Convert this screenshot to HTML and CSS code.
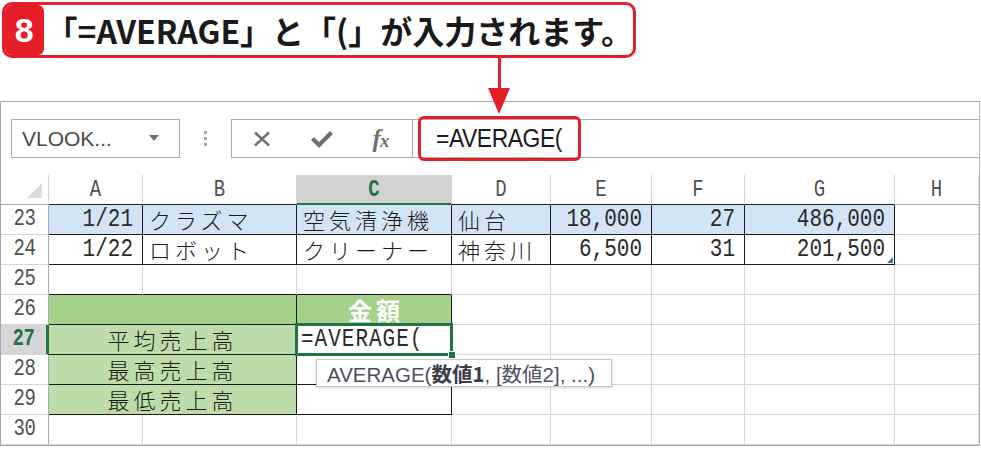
FILE: index.html
```html
<!DOCTYPE html>
<html lang="ja">
<head>
<meta charset="utf-8">
<title>AVERAGE</title>
<link rel="stylesheet" href="styles.css">
</head>
<body>
<div class="page">
  <div class="callout">
    <div class="step">8</div>
    <div class="msg">「=AVERAGE」と「(」が入力されます。</div>
  </div>
  <div class="arrow"><div class="shaft"></div><div class="head"></div></div>

  <div class="window">
    <div class="fbar">
      <div class="namebox"><span class="name">VLOOK...</span><span class="dd"></span></div>
      <div class="grip"><i></i><i></i><i></i></div>
      <div class="btns">
        <svg class="ico" width="18" height="16" viewBox="0 0 18 16"><path d="M2 1.5 L16 14.5 M16 1.5 L2 14.5" stroke="#6f6f6f" stroke-width="2.4" fill="none"/></svg>
        <svg class="ico" width="24" height="18" viewBox="0 0 24 18"><path d="M2.5 8.5 L9 15 L21.5 2.5" stroke="#6f6f6f" stroke-width="4.2" fill="none"/></svg>
        <span class="fx"><span class="f">f</span><span class="x">x</span></span>
      </div>
      <div class="input"><span class="ftext">=AVERAGE(</span></div>
    </div>

    <div class="sheet">
      <div class="corner"><span class="tri"></span></div>
      <div class="ch bk"><span class="v">A</span></div><div class="ch bk"><span class="v">B</span></div><div class="ch selc"><span class="v">C</span></div><div class="ch bk"><span class="v">D</span></div><div class="ch bk"><span class="v">E</span></div><div class="ch bk"><span class="v">F</span></div><div class="ch bk"><span class="v">G</span></div><div class="ch"><span class="v">H</span></div>

      <div class="rh"><span class="v">23</span></div>
      <div class="c t blue num"><span class="v">1/21</span></div>
      <div class="c t blue jp">クラズマ</div>
      <div class="c t blue jp">空気清浄機</div>
      <div class="c t blue jp">仙台</div>
      <div class="c t blue num"><span class="v">18,000</span></div>
      <div class="c t blue num"><span class="v">27</span></div>
      <div class="c t blue num"><span class="v">486,000</span></div>
      <div class="c"></div>

      <div class="rh"><span class="v">24</span></div>
      <div class="c t num"><span class="v">1/22</span></div>
      <div class="c t jp">ロボット</div>
      <div class="c t jp">クリーナー</div>
      <div class="c t jp">神奈川</div>
      <div class="c t num"><span class="v">6,500</span></div>
      <div class="c t num"><span class="v">31</span></div>
      <div class="c t num mark"><span class="v">201,500</span></div>
      <div class="c"></div>

      <div class="rh"><span class="v">25</span></div>
      <div class="c top"></div><div class="c top"></div><div class="c top"></div>
      <div class="c"></div><div class="c"></div><div class="c"></div><div class="c"></div><div class="c"></div>

      <div class="rh"><span class="v">26</span></div>
      <div class="c t g1 span2"></div>
      <div class="c t g1 head">金額</div>
      <div class="c"></div><div class="c"></div><div class="c"></div><div class="c"></div><div class="c"></div>

      <div class="rh selr"><span class="v">27</span></div>
      <div class="c t g2 span2 jp ctr">平均売上高</div>
      <div class="c t active"><span class="v">=AVERAGE(</span></div>
      <div class="c"></div><div class="c"></div><div class="c"></div><div class="c"></div><div class="c"></div>

      <div class="rh"><span class="v">28</span></div>
      <div class="c t g2 span2 jp ctr">最高売上高</div>
      <div class="c t"></div>
      <div class="c"></div><div class="c"></div><div class="c"></div><div class="c"></div><div class="c"></div>

      <div class="rh"><span class="v">29</span></div>
      <div class="c t g2 span2 jp ctr">最低売上高</div>
      <div class="c t"></div>
      <div class="c"></div><div class="c"></div><div class="c"></div><div class="c"></div><div class="c"></div>

      <div class="rh"><span class="v">30</span></div>
      <div class="c"></div><div class="c"></div><div class="c"></div><div class="c"></div><div class="c"></div><div class="c"></div><div class="c"></div><div class="c"></div>

      <div class="tip">AVERAGE(<b>数値1</b>, [数値2], ...)</div>
    </div>
  </div>

  <div class="hl"></div>
</div>
</body>
</html>
```

FILE: styles.css
```css
html, body {
  margin: 0;
  padding: 0;
  background: #fff;
}

.page {
  position: relative;
  width: 981px;
  height: 449px;
  overflow: hidden;
}

/* ---------- callout ---------- */
.callout {
  margin: 2px 0 0 2px;
  width: 634px;
  height: 56px;
  box-sizing: border-box;
  border: 3px solid #e61e2a;
  border-radius: 10px;
  display: flex;
  overflow: hidden;
  background: #fff;
}

.step {
  width: 48px;
  background: #e61e2a;
  color: #fff;
  font-family: "Liberation Sans", Arial, sans-serif;
  font-weight: 700;
  font-size: 34px;
  display: flex;
  align-items: center;
  justify-content: center;
  border-radius: 0 6px 6px 0;
}

.msg {
  flex: 1;
  padding-left: 2px;
  font-family: "Noto Sans CJK JP", sans-serif;
  font-weight: 700;
  font-size: 32px;
  color: #1a1a1a;
  line-height: 50px;
  white-space: nowrap;
}

.arrow {
  position: absolute;
  left: 488px;
  top: 58px;
  width: 22px;
  display: flex;
  flex-direction: column;
  align-items: center;
  z-index: 5;
}
.arrow .shaft {
  width: 3px;
  height: 30px;
  background: #e61e2a;
}
.arrow .head {
  width: 0;
  height: 0;
  border-left: 11px solid transparent;
  border-right: 11px solid transparent;
  border-top: 26px solid #e61e2a;
}

.hl {
  position: absolute;
  left: 418px;
  top: 116px;
  width: 163px;
  height: 45px;
  box-sizing: border-box;
  border: 3px solid #e61e2a;
  border-radius: 6px;
  z-index: 4;
}

/* ---------- window ---------- */
.window {
  margin-top: 43px;
  width: 980px;
  box-sizing: border-box;
  border: 1px solid #a5a5a5;
  border-right-color: #b5b5b5;
}

.fbar {
  display: flex;
  align-items: stretch;
  height: 39px;
  padding: 17px 0 17px 10px;
}

.namebox {
  width: 169px;
  box-sizing: border-box;
  border: 1px solid #ababab;
  display: flex;
  align-items: center;
  justify-content: space-between;
  padding: 0 20px 0 10px;
}
.name {
  font-family: "Liberation Sans", Arial, sans-serif;
  font-size: 21px;
  color: #4a4a4a;
}
.dd {
  width: 0;
  height: 0;
  border-left: 5.5px solid transparent;
  border-right: 5.5px solid transparent;
  border-top: 6px solid #6f6f6f;
  margin-top: -2px;
}

.grip {
  width: 51px;
  display: flex;
  flex-direction: column;
  align-items: center;
  justify-content: center;
  gap: 3px;
}
.grip i {
  display: block;
  width: 3px;
  height: 3px;
  background: #a8a8a8;
}

.btns {
  width: 181px;
  box-sizing: border-box;
  border: 1px solid #ababab;
  border-right: none;
  display: grid;
  grid-template-columns: 60px 60px 60px;
  align-items: center;
  justify-items: center;
}
.ico {
  display: block;
}
.fx {
  font-family: "Liberation Serif", "Times New Roman", serif;
  font-style: italic;
  font-weight: 700;
  color: #6f6f6f;
  font-size: 25px;
  line-height: 1;
  padding-right: 2px;
}
.fx .x {
  font-size: 19px;
  margin-left: -1px;
}

.input {
  flex: 1;
  box-sizing: border-box;
  border: 1px solid #ababab;
  border-right: none;
  display: flex;
  align-items: center;
  padding-left: 23px;
}
.ftext {
  display: inline-block;
  font-family: "Liberation Sans", Arial, sans-serif;
  font-size: 26px;
  color: #1a1a1a;
  transform: scaleX(0.88);
  transform-origin: left center;
  letter-spacing: -0.5px;
}

/* ---------- sheet ---------- */
.sheet {
  position: relative;
  display: grid;
  grid-template-columns: 48px 94px 154px 155px 99px 101px 93px 150px 1fr;
  grid-auto-rows: 30px;
}

.sheet > div {
  box-sizing: border-box;
}

/* tall, narrow spreadsheet digits */
.v {
  display: inline-block;
  transform: scaleY(1.22);
  transform-origin: center 55%;
}

.corner {
  border-right: 1px solid #d5d5d5;
  border-bottom: 1px solid #ababab;
  position: relative;
}
.tri {
  position: absolute;
  right: 6px;
  bottom: 6px;
  width: 0;
  height: 0;
  border-left: 15px solid transparent;
  border-bottom: 15px solid #dadada;
}

.ch {
  border-right: 1px solid #d5d5d5;
  border-bottom: 1px solid #ababab;
  text-align: center;
  font-family: "Liberation Mono", monospace;
  font-size: 19px;
  line-height: 30px;
  color: #505050;
}
.ch.bk {
  border-bottom-color: #1a1a1a;
}
.ch.selc {
  background: #d2d2d2;
  border-bottom: 2px solid #217346;
  color: #217346;
  font-weight: 700;
}

.rh {
  border-right: 1px solid #ababab;
  border-bottom: 1px solid #d5d5d5;
  text-align: center;
  font-family: "Liberation Mono", monospace;
  font-size: 19px;
  letter-spacing: -0.5px;
  line-height: 29px;
  color: #505050;
}
.rh.selr {
  background: #d6d6d6;
  border-right: 3px solid #217346;
  color: #217346;
  font-weight: 700;
}

.c {
  border-right: 1px solid #d5d5d5;
  border-bottom: 1px solid #d5d5d5;
  font-family: "Liberation Mono", "Noto Sans CJK JP", monospace;
  font-size: 21px;
  line-height: 29px;
  color: #2a2a2a;
  padding: 0 4px;
  white-space: nowrap;
}
.c.t {
  border-right-color: #1a1a1a;
  border-bottom-color: #1a1a1a;
}
.c.top {
  border-bottom-color: #1a1a1a;
}
.c.num {
  text-align: right;
  padding-right: 9px;
}
.c.jp {
  font-family: "Noto Sans CJK JP", sans-serif;
  font-size: 22px;
  font-weight: 300;
  letter-spacing: 4px;
  padding-left: 6px;
  color: #1a1a1a;
}
.c.ctr {
  text-align: center;
  padding-left: 4px;
}
.blue {
  background: #d3e5f5;
}
.g1 {
  background: #a5d08a;
}
.g2 {
  background: #bddca9;
}
.span2 {
  grid-column: span 2;
}
.c.head {
  text-align: center;
  color: #fff;
  font-family: "Noto Sans CJK JP", sans-serif;
  font-weight: 700;
  font-size: 24px;
  letter-spacing: 4px;
  padding-left: 8px;
}

.c.active {
  position: relative;
  padding-left: 4px;
  letter-spacing: 1px;
  z-index: 2;
}
.c.active::before {
  content: "";
  position: absolute;
  left: -2px;
  top: -2px;
  right: -2px;
  bottom: -2px;
  border: 3px solid #217346;
}
.c.active::after {
  content: "";
  position: absolute;
  right: -5px;
  bottom: -5px;
  width: 6px;
  height: 6px;
  background: #217346;
  border: 1px solid #fff;
}

.c.mark {
  position: relative;
}
.c.mark::after {
  content: "";
  position: absolute;
  right: 1px;
  bottom: 1px;
  width: 6px;
  height: 6px;
  background: #2f6fc4;
  clip-path: polygon(100% 0, 100% 100%, 0 100%);
}

.tip {
  position: absolute;
  left: 315px;
  top: 184px;
  width: 296px;
  height: 28px;
  box-sizing: border-box;
  background: #fff;
  border: 1px solid #c6c6c6;
  box-shadow: 0 1px 3px rgba(0, 0, 0, 0.18);
  font-family: "Liberation Sans", "Noto Sans CJK JP", sans-serif;
  font-size: 20.5px;
  line-height: 26px;
  color: #4f4f5f;
  padding-left: 10px;
  white-space: nowrap;
  z-index: 3;
}
.tip b {
  font-family: "Noto Sans CJK JP", sans-serif;
  color: #3c3c4a;
}
```
